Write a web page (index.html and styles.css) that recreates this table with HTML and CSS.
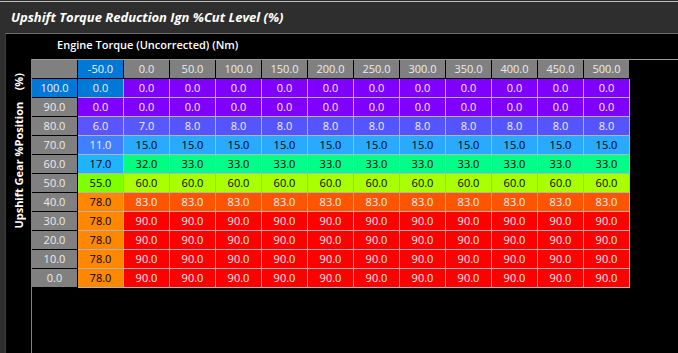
FILE: index.html
```html
<!DOCTYPE html>
<html>
<head>
<meta charset="utf-8">
<link rel="stylesheet" href="styles.css">
</head>
<body>
<div class="window">
  <div class="titlebar"><span class="title">Upshift Torque Reduction Ign %Cut Level (%)</span></div>
  <div class="panel">
    <div class="xlabel">Engine Torque (Uncorrected) (Nm)</div>
    <div class="plot">
      <div class="ylabel"><span>Upshift Gear %Position&nbsp;&nbsp;&nbsp;&nbsp;(%)</span></div>
      <div class="area">
        <div class="grid">
          <div class="h corner"></div>
          <div class="h sel">-50.0</div><div class="h">0.0</div><div class="h">50.0</div><div class="h">100.0</div><div class="h">150.0</div><div class="h">200.0</div><div class="h">250.0</div><div class="h">300.0</div><div class="h">350.0</div><div class="h">400.0</div><div class="h">450.0</div><div class="h">500.0</div>

          <div class="r sel">100.0</div>
          <div class="d sel">0.0</div><div class="d c0">0.0</div><div class="d c0">0.0</div><div class="d c0">0.0</div><div class="d c0">0.0</div><div class="d c0">0.0</div><div class="d c0">0.0</div><div class="d c0">0.0</div><div class="d c0">0.0</div><div class="d c0">0.0</div><div class="d c0">0.0</div><div class="d c0">0.0</div>

          <div class="r">90.0</div>
          <div class="d c0">0.0</div><div class="d c0">0.0</div><div class="d c0">0.0</div><div class="d c0">0.0</div><div class="d c0">0.0</div><div class="d c0">0.0</div><div class="d c0">0.0</div><div class="d c0">0.0</div><div class="d c0">0.0</div><div class="d c0">0.0</div><div class="d c0">0.0</div><div class="d c0">0.0</div>

          <div class="r">80.0</div>
          <div class="d c6">6.0</div><div class="d c7">7.0</div><div class="d c8">8.0</div><div class="d c8">8.0</div><div class="d c8">8.0</div><div class="d c8">8.0</div><div class="d c8">8.0</div><div class="d c8">8.0</div><div class="d c8">8.0</div><div class="d c8">8.0</div><div class="d c8">8.0</div><div class="d c8">8.0</div>

          <div class="r">70.0</div>
          <div class="d c11">11.0</div><div class="d c15">15.0</div><div class="d c15">15.0</div><div class="d c15">15.0</div><div class="d c15">15.0</div><div class="d c15">15.0</div><div class="d c15">15.0</div><div class="d c15">15.0</div><div class="d c15">15.0</div><div class="d c15">15.0</div><div class="d c15">15.0</div><div class="d c15">15.0</div>

          <div class="r">60.0</div>
          <div class="d c17">17.0</div><div class="d c32">32.0</div><div class="d c33">33.0</div><div class="d c33">33.0</div><div class="d c33">33.0</div><div class="d c33">33.0</div><div class="d c33">33.0</div><div class="d c33">33.0</div><div class="d c33">33.0</div><div class="d c33">33.0</div><div class="d c33">33.0</div><div class="d c33">33.0</div>

          <div class="r">50.0</div>
          <div class="d c55">55.0</div><div class="d c60">60.0</div><div class="d c60">60.0</div><div class="d c60">60.0</div><div class="d c60">60.0</div><div class="d c60">60.0</div><div class="d c60">60.0</div><div class="d c60">60.0</div><div class="d c60">60.0</div><div class="d c60">60.0</div><div class="d c60">60.0</div><div class="d c60">60.0</div>

          <div class="r">40.0</div>
          <div class="d c78">78.0</div><div class="d c83">83.0</div><div class="d c83">83.0</div><div class="d c83">83.0</div><div class="d c83">83.0</div><div class="d c83">83.0</div><div class="d c83">83.0</div><div class="d c83">83.0</div><div class="d c83">83.0</div><div class="d c83">83.0</div><div class="d c83">83.0</div><div class="d c83">83.0</div>

          <div class="r">30.0</div>
          <div class="d c78">78.0</div><div class="d c90">90.0</div><div class="d c90">90.0</div><div class="d c90">90.0</div><div class="d c90">90.0</div><div class="d c90">90.0</div><div class="d c90">90.0</div><div class="d c90">90.0</div><div class="d c90">90.0</div><div class="d c90">90.0</div><div class="d c90">90.0</div><div class="d c90">90.0</div>

          <div class="r">20.0</div>
          <div class="d c78">78.0</div><div class="d c90">90.0</div><div class="d c90">90.0</div><div class="d c90">90.0</div><div class="d c90">90.0</div><div class="d c90">90.0</div><div class="d c90">90.0</div><div class="d c90">90.0</div><div class="d c90">90.0</div><div class="d c90">90.0</div><div class="d c90">90.0</div><div class="d c90">90.0</div>

          <div class="r">10.0</div>
          <div class="d c78">78.0</div><div class="d c90">90.0</div><div class="d c90">90.0</div><div class="d c90">90.0</div><div class="d c90">90.0</div><div class="d c90">90.0</div><div class="d c90">90.0</div><div class="d c90">90.0</div><div class="d c90">90.0</div><div class="d c90">90.0</div><div class="d c90">90.0</div><div class="d c90">90.0</div>

          <div class="r">0.0</div>
          <div class="d c78">78.0</div><div class="d c90">90.0</div><div class="d c90">90.0</div><div class="d c90">90.0</div><div class="d c90">90.0</div><div class="d c90">90.0</div><div class="d c90">90.0</div><div class="d c90">90.0</div><div class="d c90">90.0</div><div class="d c90">90.0</div><div class="d c90">90.0</div><div class="d c90">90.0</div>
        </div>
      </div>
    </div>
  </div>
</div>
</body>
</html>
```
FILE: styles.css
```css
html, body {
  margin: 0;
  padding: 0;
  background: #2e2e2e;
}
.window {
  width: 678px;
  height: 353px;
  overflow: hidden;
  display: flex;
  flex-direction: column;
  background: #2e2e2e;
  font-family: "Open Sans", "Noto Sans", sans-serif;
}
.titlebar {
  margin-top: 1px;
  border-top: 1px solid #bdbdbd;
  height: 32px;
  box-sizing: border-box;
  display: flex;
  align-items: center;
  padding-left: 11px;
  padding-bottom: 1px;
}
.title {
  color: #ffffff;
  font-weight: 700;
  font-style: italic;
  font-size: 13px;
}
.panel {
  flex: 1;
  margin-left: 5px;
  border-top: 1px solid #707070;
  border-left: 1px solid #3c3c3c;
  background: #000;
  display: flex;
  flex-direction: column;
  min-height: 0;
}
.xlabel {
  height: 25px;
  box-sizing: border-box;
  padding-left: 51px;
  padding-top: 3px;
  color: #fff;
  font-size: 11px;
  font-weight: 600;
  line-height: 16px;
}
.plot {
  flex: 1;
  display: flex;
  min-height: 0;
}
.ylabel {
  width: 25px;
  display: flex;
  justify-content: center;
  padding-top: 14px;
  box-sizing: border-box;
}
.ylabel span {
  writing-mode: vertical-rl;
  transform: rotate(180deg);
  color: #fff;
  font-size: 11px;
  font-weight: 700;
  line-height: 14px;
  white-space: nowrap;
  align-self: flex-start;
}
.area {
  flex: 1;
  border-top: 1px solid #9a9a9a;
  border-left: 1px solid #808080;
}
.grid {
  display: grid;
  grid-template-columns: repeat(13, 46px);
  grid-auto-rows: 19px;
  font-size: 11px;
}
.grid > div {
  box-sizing: border-box;
  display: flex;
  align-items: center;
  justify-content: center;
  line-height: 1;
  padding-bottom: 1px;
}
.h, .r {
  background: #808080;
  color: #ececec;
  border-right: 1px solid #000;
  border-bottom: 1px solid #000;
}
.d {
  border-right: 1px solid #b4b4b4;
  border-bottom: 1px solid #b4b4b4;
  color: #000;
}
.h.sel, .r.sel, .d.sel {
  background: #0078d7;
  color: #f2f2f2;
}
.c0 { background: #8000ff; color: #f2f2f2; }
.c6 { background: #5a55ff; color: #f2f2f2; }
.c7 { background: #5858ff; color: #f2f2f2; }
.c8 { background: #5555ff; color: #f2f2f2; }
.c11 { background: #4080ff; color: #f2f2f2; }
.c15 { background: #2aaaff; color: #000; }
.c17 { background: #1eb4ff; color: #000; }
.c32 { background: #00ff80; color: #000; }
.c33 { background: #00ff88; color: #000; }
.c55 { background: #80ff00; color: #000; }
.c60 { background: #aaff00; color: #000; }
.c78 { background: #ff8800; color: #000; }
.c83 { background: #ff5500; color: #f2f2f2; }
.c90 { background: #ff0000; color: #f2f2f2; }
```
